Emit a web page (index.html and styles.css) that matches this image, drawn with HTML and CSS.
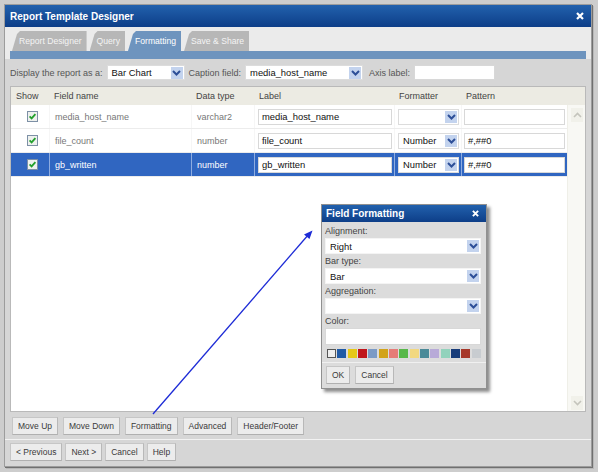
FILE: index.html
```html
<!DOCTYPE html>
<html>
  <head>
    <meta charset="utf-8" />
    <link rel="stylesheet" href="styles.css">
  </head>
  <body>
    <div class="page">
      <div class="window">
        <div class="titlebar">
          <span class="title">Report Template Designer</span>
          <svg class="close" width="8" height="8" viewBox="0 0 8 8"><path d="M1 1 L7 7 M7 1 L1 7" stroke="#fff" stroke-width="2.2"/></svg>
        </div>

        <div class="tab-area">
          <div class="tabs">
            <div class="tab">Report Designer</div>
            <div class="tab">Query</div>
            <div class="tab active">Formatting</div>
            <div class="tab">Save &amp; Share</div>
          </div>
          <div class="tab-strip"></div>
        </div>

        <div class="toolbar">
          <span class="lbl">Display the report as a:</span>
          <div class="select chart-type">
            <span class="select-text">Bar Chart</span>
            <span class="drop"><svg width="9" height="6" viewBox="0 0 9 6"><path d="M1 1 L4.5 4.5 L8 1" fill="none" stroke="#2d4f98" stroke-width="2"/></svg></span>
          </div>
          <span class="lbl">Caption field:</span>
          <div class="select caption">
            <span class="select-text">media_host_name</span>
            <span class="drop"><svg width="9" height="6" viewBox="0 0 9 6"><path d="M1 1 L4.5 4.5 L8 1" fill="none" stroke="#2d4f98" stroke-width="2"/></svg></span>
          </div>
          <span class="lbl axis-lbl">Axis label:</span>
          <div class="textbox axis"></div>
        </div>

        <div class="grid-box">
          <div class="grid-head">
            <div>Show</div>
            <div>Field name</div>
            <div>Data type</div>
            <div>Label</div>
            <div>Formatter</div>
            <div>Pattern</div>
          </div>
          <div class="grid-body">
            <div class="rows">
              <div class="grid-row">
                <div class="cell-check"><svg width="11" height="11" viewBox="0 0 11 11"><rect x="0.5" y="0.5" width="10" height="10" fill="#eef1ee" stroke="#7d90a6"/><path d="M2.6 5.4 L4.6 7.4 L8.4 3.2" fill="none" stroke="#22a02c" stroke-width="1.8"/></svg></div>
                <div>media_host_name</div>
                <div>varchar2</div>
                <div><div class="textbox label-input">media_host_name</div></div>
                <div>
                  <div class="select fmt">
                    <span class="select-text"></span>
                    <span class="drop"><svg width="9" height="6" viewBox="0 0 9 6"><path d="M1 1 L4.5 4.5 L8 1" fill="none" stroke="#2d4f98" stroke-width="2"/></svg></span>
                  </div>
                </div>
                <div><div class="textbox pattern-input"></div></div>
              </div>
              <div class="grid-row">
                <div class="cell-check"><svg width="11" height="11" viewBox="0 0 11 11"><rect x="0.5" y="0.5" width="10" height="10" fill="#eef1ee" stroke="#7d90a6"/><path d="M2.6 5.4 L4.6 7.4 L8.4 3.2" fill="none" stroke="#22a02c" stroke-width="1.8"/></svg></div>
                <div>file_count</div>
                <div>number</div>
                <div><div class="textbox label-input">file_count</div></div>
                <div>
                  <div class="select fmt">
                    <span class="select-text">Number</span>
                    <span class="drop"><svg width="9" height="6" viewBox="0 0 9 6"><path d="M1 1 L4.5 4.5 L8 1" fill="none" stroke="#2d4f98" stroke-width="2"/></svg></span>
                  </div>
                </div>
                <div><div class="textbox pattern-input">#,##0</div></div>
              </div>
              <div class="grid-row selected">
                <div class="cell-check"><svg width="11" height="11" viewBox="0 0 11 11"><rect x="0.5" y="0.5" width="10" height="10" fill="#eef1ee" stroke="#7d90a6"/><path d="M2.6 5.4 L4.6 7.4 L8.4 3.2" fill="none" stroke="#22a02c" stroke-width="1.8"/></svg></div>
                <div>gb_written</div>
                <div>number</div>
                <div><div class="textbox label-input">gb_written</div></div>
                <div>
                  <div class="select fmt">
                    <span class="select-text">Number</span>
                    <span class="drop"><svg width="9" height="6" viewBox="0 0 9 6"><path d="M1 1 L4.5 4.5 L8 1" fill="none" stroke="#2d4f98" stroke-width="2"/></svg></span>
                  </div>
                </div>
                <div><div class="textbox pattern-input">#,##0</div></div>
              </div>
            </div>
            <div class="scrollbar">
              <div class="sb-btn"><svg width="9" height="6" viewBox="0 0 9 6"><path d="M1 5 L4.5 1.5 L8 5" fill="none" stroke="#c4c4bc" stroke-width="1.6"/></svg></div>
              <div class="sb-btn"><svg width="9" height="6" viewBox="0 0 9 6"><path d="M1 1 L4.5 4.5 L8 1" fill="none" stroke="#c4c4bc" stroke-width="1.6"/></svg></div>
            </div>
          </div>
        </div>

        <div class="actions">
          <button class="btn">Move Up</button>
          <button class="btn">Move Down</button>
          <button class="btn">Formatting</button>
          <button class="btn">Advanced</button>
          <button class="btn">Header/Footer</button>
        </div>

        <div class="nav">
          <button class="btn">&lt; Previous</button>
          <button class="btn">Next &gt;</button>
          <button class="btn">Cancel</button>
          <button class="btn">Help</button>
        </div>
      </div>

      <!-- popup over the grid -->
      <div class="dialog">
        <div class="dialog-title">
          <span>Field Formatting</span>
          <svg width="7" height="7" viewBox="0 0 8 8"><path d="M1 1 L7 7 M7 1 L1 7" stroke="#fff" stroke-width="2.2"/></svg>
        </div>
        <div class="dialog-body">
          <div class="dlg-lbl">Alignment:</div>
          <div class="select dlg">
            <span class="select-text">Right</span>
            <span class="drop"><svg width="9" height="6" viewBox="0 0 9 6"><path d="M1 1 L4.5 4.5 L8 1" fill="none" stroke="#2d4f98" stroke-width="2"/></svg></span>
          </div>
          <div class="dlg-lbl">Bar type:</div>
          <div class="select dlg">
            <span class="select-text">Bar</span>
            <span class="drop"><svg width="9" height="6" viewBox="0 0 9 6"><path d="M1 1 L4.5 4.5 L8 1" fill="none" stroke="#2d4f98" stroke-width="2"/></svg></span>
          </div>
          <div class="dlg-lbl">Aggregation:</div>
          <div class="select dlg">
            <span class="select-text"></span>
            <span class="drop"><svg width="9" height="6" viewBox="0 0 9 6"><path d="M1 1 L4.5 4.5 L8 1" fill="none" stroke="#2d4f98" stroke-width="2"/></svg></span>
          </div>
          <div class="dlg-lbl">Color:</div>
          <div class="textbox color-input"></div>
          <div class="swatches">
            <span class="swatch none"></span>
            <span class="swatch" style="background:#1f5aa6"></span>
            <span class="swatch" style="background:#e6c818"></span>
            <span class="swatch" style="background:#c0161c"></span>
            <span class="swatch" style="background:#7c9bc6"></span>
            <span class="swatch" style="background:#d2a31a"></span>
            <span class="swatch" style="background:#e67c78"></span>
            <span class="swatch" style="background:#58b84a"></span>
            <span class="swatch" style="background:#f2d880"></span>
            <span class="swatch" style="background:#4a8a98"></span>
            <span class="swatch" style="background:#b8aad8"></span>
            <span class="swatch" style="background:#92d2bc"></span>
            <span class="swatch" style="background:#183c7a"></span>
            <span class="swatch" style="background:#a6382a"></span>
            <span class="swatch" style="background:#c8ccd0"></span>
          </div>
        </div>
        <div class="dialog-foot">
          <button class="btn">OK</button>
          <button class="btn">Cancel</button>
        </div>
      </div>

      <svg class="pointer" width="598" height="472" viewBox="0 0 598 472">
        <line x1="153" y1="414" x2="309" y2="234" stroke="#1d2bd6" stroke-width="1.3"/>
        <polygon points="312.5,230.5 309.5,239 304,234.5" fill="#1d2bd6"/>
      </svg>
    </div>
  </body>
</html>
```

FILE: styles.css
```css
html,
body {
  margin: 0;
  padding: 0;
}

body {
  background: #cdcdcd;
  font-family: "Liberation Sans", Arial, sans-serif;
  font-size: 9px;
  color: #333;
}

.page {
  position: relative;
  width: 598px;
  height: 472px;
  overflow: hidden;
}

.window {
  box-sizing: border-box;
  margin: 4px 0 0 4px;
  width: 588px;
  height: 463px;
  border: 1px solid #9c9c9c;
  box-shadow: 1px 1px 0 #707070, 2px 2px 0 #b8b8b8;
  background: #d6d6d6;
  display: flex;
  flex-direction: column;
}

/* title bar */
.titlebar {
  height: 22px;
  flex: none;
  display: flex;
  align-items: center;
  justify-content: space-between;
  padding: 0 7px 0 5px;
  background: linear-gradient(#2261ad, #0d3e88);
}
.titlebar .title {
  color: #fff;
  font-weight: bold;
  font-size: 10px;
}

/* tabs */
.tab-area {
  flex: none;
  background: #ebebeb;
  padding: 0 5px;
}
.tabs {
  height: 24px;
  display: flex;
  align-items: flex-end;
  gap: 3px;
  padding-left: 2px;
}
.tab {
  height: 20px;
  line-height: 21px;
  padding: 0 5px 0 7px;
  background: #b7b7b7;
  color: #f4f4f4;
  font-size: 8.6px;
  clip-path: polygon(0 100%, 5px 3px, 8px 0, 100% 0, 100% 100%);
}
.tab.active {
  background: #6e94be;
  color: #fff;
}
.tab-strip {
  height: 8px;
  background: #6e94be;
}

/* toolbar */
.toolbar {
  flex: none;
  height: 27px;
  display: flex;
  align-items: center;
  gap: 4px;
  padding: 0 5px;
  color: #555;
}
.toolbar .axis-lbl {
  margin-left: 2px;
}

.select {
  box-sizing: border-box;
  height: 15px;
  display: flex;
  align-items: center;
  justify-content: space-between;
  background: #fff;
  border: 1px solid #dcdcdc;
  color: #111;
  font-size: 9.4px;
}
.select-text {
  padding-left: 4px;
}
.drop {
  width: 12px;
  height: 12px;
  margin-right: 1px;
  background: #c3d3ee;
  display: flex;
  align-items: center;
  justify-content: center;
}
.chart-type {
  width: 78px;
}
.caption {
  width: 118px;
}
.textbox {
  box-sizing: border-box;
  height: 15px;
  line-height: 13px;
  background: #fff;
  border: 1px solid #d8d8d8;
  color: #111;
  font-size: 9.4px;
  padding-left: 3px;
}
.axis {
  width: 81px;
}

/* field grid */
.grid-box {
  flex: none;
  margin: 0 5px;
  height: 326px;
  box-sizing: border-box;
  border: 1px solid #b9b9b9;
  background: #fff;
  display: flex;
  flex-direction: column;
}
.grid-head,
.grid-row {
  display: grid;
  grid-template-columns: 38px 142px 63px 140px 67px 106px;
  align-items: center;
}
.grid-head {
  height: 18px;
  background: #ecebe3;
  color: #444;
}
.grid-head div,
.grid-row div {
  padding-left: 5px;
}
.grid-body {
  flex: 1;
  display: flex;
}
.rows {
  flex: 1;
}
.grid-row {
  height: 24px;
  box-sizing: border-box;
  border-bottom: 1px solid #ececec;
  color: #777;
}
.grid-row > div {
  height: 100%;
  display: flex;
  align-items: center;
  box-sizing: border-box;
}
.grid-row > div + div {
  border-left: 1px solid #f6f6f6;
}
.grid-row .cell-check {
  padding-left: 16px;
}
.grid-row > div:nth-child(4) {
  padding-left: 3px;
}
.grid-row > div:nth-child(5) {
  padding-left: 3px;
}
.grid-row > div:nth-child(6) {
  padding-left: 2px;
}
.grid-row .select,
.grid-row .textbox {
  padding-left: 0;
  height: 16px;
}
.grid-row .textbox {
  padding-left: 3px;
  line-height: 14px;
}
.label-input {
  width: 134px;
}
.fmt {
  width: 61px;
}
.pattern-input {
  width: 101px;
}
.grid-row.selected {
  background: #3066c1;
  color: #fff;
}
.grid-row.selected > div + div {
  border-left: 1px solid #8eace0;
}

.scrollbar {
  width: 17px;
  background: #f8f8f4;
  border-left: 1px solid #efefe8;
  display: flex;
  flex-direction: column;
  justify-content: space-between;
  padding: 3px 0 1px;
}
.sb-btn {
  height: 14px;
  margin: 0 2px 0 3px;
  background: #f1f1ea;
  display: flex;
  align-items: center;
  justify-content: center;
}

/* buttons */
.btn {
  box-sizing: border-box;
  height: 18px;
  padding: 0 5px;
  border: 1px solid #c6c6c6;
  border-right-color: #b8b8b8;
  border-bottom-color: #b0b0b0;
  background: #ececec;
  color: #3a3a3a;
  font-family: "Liberation Sans", Arial, sans-serif;
  font-size: 8.5px;
}
.actions {
  flex: none;
  height: 26px;
  display: flex;
  gap: 5px;
  padding: 5px 0 0 7px;
  box-sizing: border-box;
}
.nav {
  flex: none;
  margin-top: 1px;
  border-top: 1px solid #f2f2f2;
  display: flex;
  gap: 3px;
  padding: 3px 0 0 5px;
}

/* field formatting popup */
.dialog {
  position: absolute;
  left: 321px;
  top: 204px;
  width: 166px;
  box-sizing: border-box;
  border: 1px solid #909090;
  background: #dcdcdc;
  box-shadow: 3px 3px 3px rgba(0, 0, 0, 0.45);
}
.dialog-title {
  height: 17px;
  display: flex;
  align-items: center;
  justify-content: space-between;
  padding: 0 7px 0 4px;
  background: linear-gradient(#2261ad, #0d3e88);
  color: #fff;
  font-weight: bold;
  font-size: 10px;
}
.dialog-body {
  padding: 2px 5px 0 3px;
}
.dlg-lbl {
  height: 14px;
  line-height: 14px;
  color: #444;
}
.select.dlg {
  height: 16px;
  border-color: #f4f4f4;
}
.color-input {
  height: 17px;
}
.swatches {
  margin-top: 4px;
  display: flex;
  justify-content: space-between;
  padding-left: 2px;
}
.swatch {
  width: 9px;
  height: 9px;
}
.swatch.none {
  box-sizing: border-box;
  border: 1px solid #555;
  background: #eee;
}
.dialog-foot {
  margin-top: 4px;
  border-top: 1px solid #f0f0f0;
  display: flex;
  gap: 5px;
  padding: 3px 4px 4px;
}

.pointer {
  position: absolute;
  left: 0;
  top: 0;
  pointer-events: none;
}
```
